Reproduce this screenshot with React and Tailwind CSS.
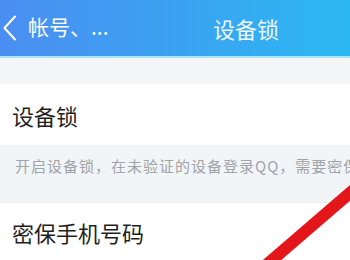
import React from 'react';

const cjk = { fontFamily: '"Noto Sans CJK SC", "Noto Sans", sans-serif' };

/**
 * Thin white back chevron used in the nav bar.
 */
function BackChevron() {
  return (
    <svg className="w-[16px] h-[26px]" viewBox="0 0 16 26" fill="none">
      <path d="M13 1.5 L2.5 13 L13 24.5" stroke="#ffffff" strokeWidth="2" strokeLinecap="round" strokeLinejoin="round" />
    </svg>
  );
}

/**
 * Red marker stroke drawn over the page.
 */
function RedMark() {
  return (
    <svg className="absolute inset-0 pointer-events-none" width="350" height="260" viewBox="0 0 350 260">
      <line x1="264" y1="267" x2="358" y2="186" stroke="#e5161a" strokeWidth="12" />
    </svg>
  );
}

export default function App() {
  return (
    <div className="relative w-[350px] h-[260px] overflow-hidden bg-white" style={cjk}>
      {/* Nav bar */}
      <div className="h-[56px] flex items-center bg-gradient-to-r from-[#4a8ef1] via-[#3aa2f1] to-[#2ab8f2]">
        <div className="w-[213px] flex items-center pl-[2px]">
          <BackChevron />
          <span className="ml-[10px] text-[21px] text-white leading-none -mt-[3px]">帐号、...</span>
        </div>
        <span className="text-[22px] text-[#eef7ff] leading-none">设备锁</span>
      </div>
      <div className="h-[2px] bg-[#a9e3f8]" />

      {/* Spacer */}
      <div className="h-[26px] bg-[#f3f5f7]" />

      {/* Device lock row */}
      <div className="h-[61px] flex items-center px-[12px] bg-white">
        <span className="text-[22px] text-[#1f1f1f] leading-none">设备锁</span>
      </div>

      {/* Description */}
      <div className="h-[58px] bg-[#f2f5f7] pl-[15px] pt-[11px] border-b border-[#e9ecee] overflow-hidden">
        <p className="text-[15px] tracking-[1px] text-[#a0a4a8] whitespace-nowrap leading-[20px]">
          开启设备锁，在未验证的设备登录QQ，需要密保
        </p>
      </div>

      {/* Phone row */}
      <div className="h-[58px] flex items-center px-[12px] bg-white">
        <span className="text-[22px] text-[#1f1f1f] leading-none">密保手机号码</span>
      </div>

      <RedMark />
    </div>
  );
}
